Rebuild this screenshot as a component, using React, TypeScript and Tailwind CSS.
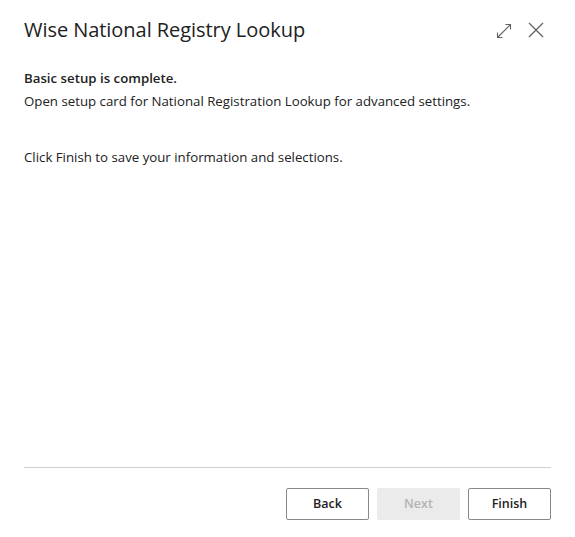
export default function App() {
  return (
    <div
      className="flex h-[537px] w-[575px] flex-col bg-white text-[#212121]"
      style={{ fontFamily: '"Open Sans", "Noto Sans", sans-serif' }}
    >
      <header className="flex items-start justify-between pl-6 pr-[31px] pt-4">
        <h1 className="text-[20px] leading-[28px] tracking-[-0.05px]">Wise National Registry Lookup</h1>
        <div className="mt-[7px] flex items-center gap-4 text-[#616161]">
          <button aria-label="Expand" className="h-4 w-4">
            <svg viewBox="0 0 16 16" width="16" height="16" fill="none" stroke="currentColor" strokeWidth="1.1">
              <path d="M1.5 14.5 L14.5 1.5" />
              <path d="M9.5 1.5 H14.5 V6.5" />
              <path d="M1.5 9.5 V14.5 H6.5" />
            </svg>
          </button>
          <button aria-label="Close" className="-mt-[2px] h-4 w-4">
            <svg viewBox="0 0 16 16" width="16" height="16" fill="none" stroke="currentColor" strokeWidth="1.3">
              <path d="M1 1 L15 15" />
              <path d="M15 1 L1 15" />
            </svg>
          </button>
        </div>
      </header>

      <main className="flex-1 pl-6 pr-6 text-[13.25px] leading-[23px]">
        <p className="mt-[23px] font-semibold">Basic setup is complete.</p>
        <p>Open setup card for National Registration Lookup for advanced settings.</p>
        <p className="mt-[33px]">Click Finish to save your information and selections.</p>
      </main>

      <footer className="pl-6 pr-6 pb-[17px]">
        <div className="h-px bg-[#d1d1d1]" />
        <div className="flex justify-end gap-2 pt-5">
          <button className="h-8 w-[83px] rounded-[2px] border border-[#8a8886] text-[12.5px] font-semibold">Back</button>
          <button
            disabled
            className="h-8 w-[83px] rounded-[2px] bg-[#ebebeb] text-[12.5px] font-semibold text-[#b3b3b3]"
          >
            Next
          </button>
          <button className="h-8 w-[83px] rounded-[2px] border border-[#8a8886] text-[12.5px] font-semibold">Finish</button>
        </div>
      </footer>
    </div>
  )
}
